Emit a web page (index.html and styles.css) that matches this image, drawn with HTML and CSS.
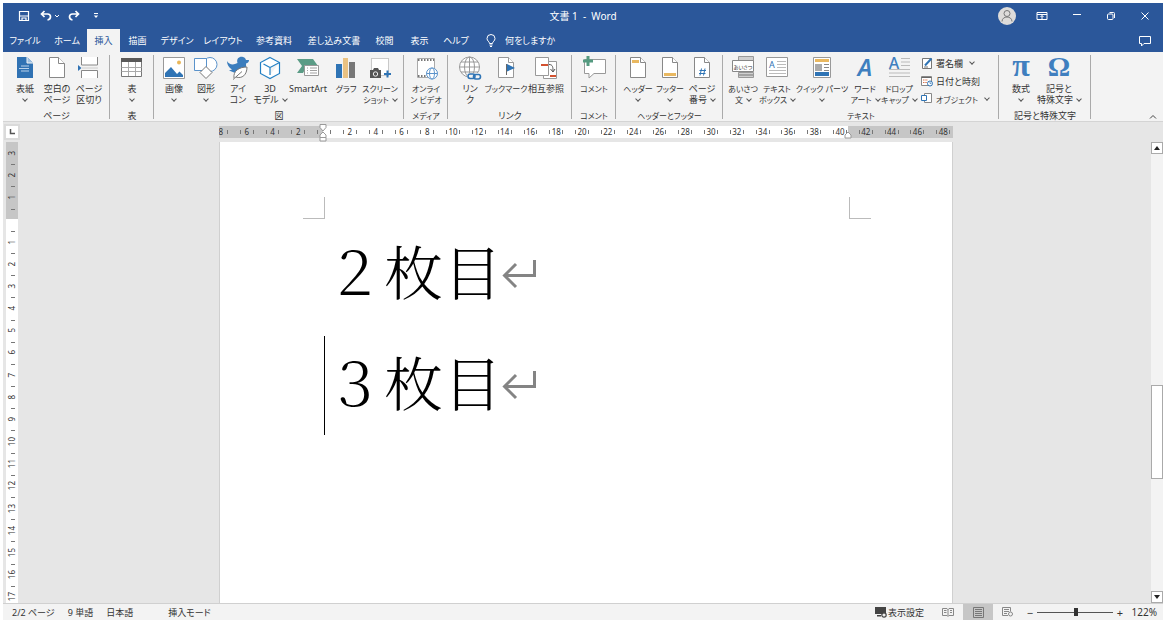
FILE: index.html
```html
<!DOCTYPE html>
<html lang="ja">
<head>
<meta charset="utf-8">
<title>文書 1 - Word</title>
<link rel="stylesheet" href="styles.css">
</head>
<body>
<div class="app">
<header class="titlebar">
  <div class="title-row">
    <div class="quick">
      <button aria-label="上書き保存"><svg width="12" height="12" viewBox="0 0 12 12" fill="none" stroke="#fff" stroke-width="1.2"><path d="M1.5 1.5h9v9h-9z"/><path d="M1.5 6h9M4 10V8h4v2" /></svg></button>
      <button aria-label="元に戻す"><svg width="12" height="12" viewBox="0 0 12 12" fill="none" stroke="#fff" stroke-width="1.7"><path d="M4.5 1 1.5 4l3 3M2 4h5.5c4 0 4 5.500 0 6"/></svg></button>
      <button class="tiny" aria-label="履歴"><svg width="6" height="6" viewBox="0 0 6 6" fill="none" stroke="#fff"><path d="M1 2l2 2 2-2"/></svg></button>
      <button aria-label="やり直し"><svg width="12" height="12" viewBox="0 0 12 12" fill="none" stroke="#fff" stroke-width="1.700"><path d="M7.500 1l3 3-3 3M10 4H4.500c-4 0-4 5.500 0 6"/></svg></button>
      <button class="customize" aria-label="カスタマイズ"><svg width="6" height="6" viewBox="0 0 6 6"><path d="M1 .5h4" stroke="#fff"/><path d="M.8 2.500h4.400L3 5z" fill="#fff"/></svg></button>
    </div>
    <h1 class="title">文書 1&nbsp; -&nbsp; Word</h1>
    <div class="window-controls">
      <button class="avatar" aria-label="アカウント"><svg width="18" height="18" viewBox="0 0 18 18" fill="none" stroke="#777"><circle cx="9" cy="9" r="9" fill="#dedcda" stroke="none"/><circle cx="9" cy="6.500" r="3"/><path d="M4 14.500c0-6 10-6 10 0"/></svg></button>
      <button aria-label="リボンの表示オプション"><svg width="12" height="10" viewBox="0 0 12 10" fill="none" stroke="#fff"><path d="M1 1.500h10v7H1zM1 3.500h10M6 8V4.500M4.500 6 6 4.500 7.500 6"/></svg></button>
      <button aria-label="最小化"><svg width="10" height="10" viewBox="0 0 10 10" stroke="#fff"><path d="M1 3.500h8"/></svg></button>
      <button aria-label="元に戻す (縮小)"><svg width="10" height="10" viewBox="0 0 10 10" fill="none" stroke="#fff"><rect x="1.500" y="3" width="5.500" height="5.500" rx="1"/><path d="M3.500 1.500h4q1 0 1 1v4.500"/></svg></button>
      <button aria-label="閉じる"><svg width="10" height="10" viewBox="0 0 10 10" stroke="#fff"><path d="M1.500 1.500l7 7M8.500 1.500l-7 7"/></svg></button>
    </div>
  </div>
  <div class="tab-row">
    <nav class="tabs">
      <button>ファイル</button><button>ホーム</button><button class="active">挿入</button><button>描画</button><button>デザイン</button><button>レイアウト</button><button>参考資料</button><button>差し込み文書</button><button>校閲</button><button>表示</button><button>ヘルプ</button>
    </nav>
    <label class="tell-me"><svg width="10" height="14" viewBox="0 0 10 14" fill="none" stroke="#fff"><path d="M3.500 9.500C3.500 7.500 1 7 1 4.500a4 4 0 0 1 8 0C9 7 6.500 7.500 6.500 9.500zM3.500 11h3M4 12.500h2"/></svg><input type="text" placeholder="何をしますか" aria-label="何をしますか"></label>
    <button class="comments" aria-label="コメント"><svg width="12" height="12" viewBox="0 0 12 12" fill="none" stroke="#fff"><path d="M.5 1.500h11v7H5L2.500 11V8.500h-2z"/></svg></button>
  </div>
</header>

<section class="ribbon" aria-label="挿入">
  <div class="group g-three">
    <div class="items">
      <button class="item"><svg viewBox="0 0 24 24"><path d="M4 1h10l6 6v15H4z" fill="#3072b3"/><path d="M14 1v6h6" fill="#9cc0e2" stroke="#f3f3f3"/><path d="M8 10h8M6 12.500h10M8 15h8" stroke="#b9d2ea"/></svg><span>表紙</span><i class="chev"></i></button>
      <button class="item"><svg viewBox="0 0 24 24"><path d="M4.500 1.500h9l6 6v14h-15z" fill="#fff" stroke="#888"/><path d="M13.500 1.500v6h6" fill="#fff" stroke="#888"/></svg><span>空白の<br>ページ</span></button>
      <button class="item"><svg viewBox="0 0 24 24"><path d="M4.500 1v8h16V1M4.500 22v-7.500h16V22" fill="#fff" stroke="#888"/><path d="M5 12h16" stroke="#ccc"/><path d="M1 9l3.500 3L1 15z" fill="#3072b3"/></svg><span>ページ<br>区切り</span></button>
    </div>
    <h2>ページ</h2>
  </div>
  <div class="group g-one">
    <div class="items">
      <button class="item"><svg viewBox="0 0 24 24"><path d="M1.500 2.500h20v18h-20z" fill="#fff" stroke="#777"/><path d="M1 2h21v4H1z" fill="#595959"/><path d="M1.500 11.500h20M1.500 15.500h20M8.500 6v14M15.500 6v14" stroke="#aaa"/></svg><span>表</span><i class="chev"></i></button>
    </div>
    <h2>表</h2>
  </div>
  <div class="group g-figure">
    <div class="items">
      <button class="item"><svg viewBox="0 0 24 24"><path d="M1.500 1.500h21v21h-21z" fill="#fff" stroke="#999"/><path d="M3 21v-4l6-6 6 7 2.500-2.500L21 19v2z" fill="#2f74b5"/><circle cx="17" cy="6.500" r="2" fill="#e9b75a"/></svg><span>画像</span><i class="chev"></i></button>
      <button class="item"><svg viewBox="0 0 24 24" fill="#fff" stroke="#5b93cb"><circle cx="16" cy="8.500" r="7"/><path d="M.500 2.500h12v12H.5z"/><path d="M12 10.500l6 6-6 6-6-6z" stroke="#777"/></svg><span>図形</span><i class="chev"></i></button>
      <button class="item"><svg viewBox="0 0 24 24"><path d="M1 5c2 3.500 6 4.500 10.500 2C10 2 14 0 17 1c2 .6 2.700 2 3 3h3c0 2-1 3-3 3.500 1 8-6 12-12 9l-5-2 3-1C3 11.500 1 9 1 5z" fill="#3b7dbd"/><path d="M8 22c-1-7 5-11 13-11 0 8-5 12-11 10M7 23.500l9-8" fill="#fff" stroke="#777"/></svg><span>アイ<br>コン</span></button>
      <button class="item"><svg viewBox="0 0 24 24" fill="#fff" stroke="#2480c4" stroke-width="1.200"><path d="M12 1.500l9.500 5v11L12 22.500l-9.500-5v-11zM5.500 8l6.500 3.500M21.500 6.500L12 11.500V19"/></svg><span>3D<br>モデル<i class="chev"></i></span></button>
      <button class="item"><svg viewBox="0 0 24 24"><path d="M1 3h16l5 7H11l-4 7H1l5-7z" fill="#5b9c86"/><path d="M8.500 9.500h14v10h-14z" fill="#fff" stroke="#999"/><path d="M11 12h1M11 14.500h1M11 17h1M14 12h7M14 14.500h7M14 17h7" stroke="#888" stroke-width=".8"/></svg><span>SmartArt</span></button>
      <button class="item"><svg viewBox="0 0 24 24"><path d="M2 8h6v14H2z" fill="#2f74b5"/><path d="M9 2h5v20H9z" fill="#eac282"/><path d="M15 6h6v16h-6z" fill="#777"/></svg><span class="compact">グラフ</span></button>
      <button class="item"><svg viewBox="0 0 24 24"><path d="M3.500 2.500h17v17h-17z" fill="#fff" stroke="#999" stroke-dasharray="1 1"/><path d="M2 14h3l1-2h4l1 2h2v8H2z" fill="#555"/><circle cx="7.500" cy="18" r="2.200" fill="#555" stroke="#eee"/><path d="M19.500 14.500v7M16 18h7" stroke="#2f74b5" stroke-width="2"/></svg><span class="compact">スクリーン<br>ショット<i class="chev"></i></span></button>
    </div>
    <h2>図</h2>
  </div>
  <div class="group g-one">
    <div class="items">
      <button class="item"><svg viewBox="0 0 24 24"><path d="M3.500 2.500h17v19h-17z" fill="#fff" stroke="#aaa"/><path d="M4 4h16M4 20h9" stroke="#777" stroke-width="2" stroke-dasharray="1.500 1.500"/><g fill="#fff" stroke="#5b93cb"><circle cx="18" cy="17.500" r="5.500"/><ellipse cx="18" cy="17.500" rx="2.500" ry="5.500"/><path d="M12.500 17.500h11"/></g></svg><span class="compact">オンライ<br>ン ビデオ</span></button>
    </div>
    <h2 class="compact">メディア</h2>
  </div>
  <div class="group g-link">
    <div class="items">
      <button class="item"><svg viewBox="0 0 24 24" fill="none"><g fill="#fff" stroke="#999"><circle cx="11.500" cy="11" r="10"/><ellipse cx="11.500" cy="11" rx="5" ry="10"/><path d="M1.500 11h20M3 6h17M3 16h17M11.500 1v20"/></g><path d="M9 17h14v7H9z" fill="#f3f3f3"/><rect x="10" y="18" width="7" height="4.500" rx="2.200" stroke="#2f74b5" stroke-width="1.600"/><rect x="15.500" y="18.500" width="7" height="4.500" rx="2.200" stroke="#2f74b5" stroke-width="1.600"/></svg><span>リン<br>ク</span></button>
      <button class="item"><svg viewBox="0 0 24 24"><path d="M4.500 1.500h10l5 5v15h-15z" fill="#fff" stroke="#999"/><path d="M14.500 1.500v5h5" fill="#fff" stroke="#999"/><path d="M12.500 8v11" stroke="#666"/><path d="M13 8l8 4-8 3.500z" fill="#2f74b5"/></svg><span class="compact">ブックマーク</span></button>
      <button class="item"><svg viewBox="0 0 24 24"><path d="M9.500 5.500h13v17h-13z" fill="#fff" stroke="#999"/><path d="M1.500 1.500h13v18h-13z" fill="#fff" stroke="#999"/><path d="M7 9h7M16 20h6" stroke="#d35230" stroke-width="2"/><path d="M15 8.500c4 0 4 3 4 7M16.500 13l2.500 3 2-3" fill="none" stroke="#555"/></svg><span>相互参照</span></button>
    </div>
    <h2>リンク</h2>
  </div>
  <div class="group g-one">
    <div class="items">
      <button class="item"><svg viewBox="0 0 24 24"><path d="M2.500 3.500h21v14H12l-5 4.500v-4.500H2.500z" fill="#fff" stroke="#999"/><path d="M6 0v10M1 5h10" stroke="#559a80" stroke-width="3"/></svg><span class="compact">コメント</span></button>
    </div>
    <h2 class="compact">コメント</h2>
  </div>
  <div class="group g-three">
    <div class="items">
      <button class="item"><svg viewBox="0 0 24 24"><path d="M4.500 1.500h10l5 5v15h-15z" fill="#fff" stroke="#888"/><path d="M14.500 1.500v5h5" fill="#fff" stroke="#888"/><path d="M6 4h7v3H6z" fill="#e9b860"/></svg><span class="compact">ヘッダー</span><i class="chev"></i></button>
      <button class="item"><svg viewBox="0 0 24 24"><path d="M4.500 1.500h10l5 5v15h-15z" fill="#fff" stroke="#888"/><path d="M14.500 1.500v5h5" fill="#fff" stroke="#888"/><path d="M6 17h12v3H6z" fill="#e9b860"/></svg><span class="compact">フッター</span><i class="chev"></i></button>
      <button class="item"><svg viewBox="0 0 24 24"><path d="M4.500 1.500h10l5 5v15h-15z" fill="#fff" stroke="#888"/><path d="M14.500 1.500v5h5" fill="#fff" stroke="#888"/><path d="M11.500 12.500l-1.500 7M15 12.500l-1.500 7M9.500 14.500h6.500M9 17.500h6.500" stroke="#2f74b5"/></svg><span>ページ<br>番号<i class="chev"></i></span></button>
    </div>
    <h2 class="compact">ヘッダーとフッター</h2>
  </div>
  <div class="group g-text">
    <div class="items">
      <button class="item"><svg viewBox="0 0 24 24"><path d="M7.500.5h15v5h-15zM7.500 16.500h15v5h-15z" fill="#d0d0d0" stroke="#999"/><path d="M8 19h14" stroke="#777"/><path d="M1.500 4.500h21v11h-21z" fill="#fff" stroke="#888"/><text class="glyph-greeting" x="12" y="12.500">あいさつ</text></svg><span class="compact">あいさつ<br>文<i class="chev"></i></span></button>
      <button class="item"><svg viewBox="0 0 24 24"><path d="M1.500 1.500h21v19h-21z" fill="#fff" stroke="#999"/><text class="glyph-box" x="7" y="12">A</text><path d="M12 5.500h9M12 8.500h9M12 11.500h9M4 14.500h17M4 17.500h17" stroke="#bbb"/></svg><span class="compact">テキスト<br>ボックス<i class="chev"></i></span></button>
      <button class="item"><svg viewBox="0 0 24 24"><path d="M3.500 1.500h17v20h-17z" fill="#fff" stroke="#999"/><path d="M5 3h14v3H5z" fill="#e9b860"/><path d="M5 8h7v7H5z" fill="#aaa"/><path d="M14 8.500h5M14 11.500h5M14 14.500h5" stroke="#888"/><path d="M5 16h14v4H5z" fill="#2f74b5"/></svg><span class="compact">クイック パーツ</span><i class="chev"></i></button>
      <button class="item"><svg viewBox="0 0 24 24"><text class="glyph-art" x="12" y="20">A</text></svg><span class="compact">ワード<br>アート<i class="chev"></i></span></button>
      <button class="item"><svg viewBox="0 0 24 24"><text class="glyph-drop" x="7" y="13">A</text><path d="M14 2.500h9M14 6h9M14 9.500h9M2 13.500h21M2 17h21M2 20.500h21" stroke="#bbb"/></svg><span class="compact">ドロップ<br>キャップ<i class="chev"></i></span></button>
      <div class="small-items">
        <button><svg width="12" height="12" viewBox="0 0 12 12"><path d="M1.500 1.500h9v10h-9z" fill="#fff" stroke="#777"/><path d="M4 8.500l6.500-7" stroke="#2f74b5" stroke-width="2"/><path d="M3 10h4" stroke="#777"/></svg>署名欄<i class="chev"></i></button>
        <button><svg width="12" height="12" viewBox="0 0 12 12"><path d="M.5 1.500h10v9H.5z" fill="#fff" stroke="#888"/><path d="M.5 2.500h10" stroke="#666"/><path d="M2 5h5M2 7.500h4" stroke="#d9734f" stroke-dasharray="1.500 .8"/><circle cx="9" cy="8.500" r="2.500" fill="#fff" stroke="#2f74b5"/><path d="M9 7v1.500h1.500" fill="none" stroke="#2f74b5" stroke-width=".7"/></svg>日付と時刻</button>
        <button><svg width="12" height="12" viewBox="0 0 12 12" fill="#fff"><path d="M3.500.5h7v9h-7z" stroke="#888"/><path d="M.5 2.500h5v5h-5z" stroke="#2f74b5"/></svg><span class="compact">オブジェクト</span><i class="chev"></i></button>
      </div>
    </div>
    <h2 class="compact">テキスト</h2>
  </div>
  <div class="group g-symbol">
    <div class="items">
      <button class="item"><svg viewBox="0 0 24 24"><text class="glyph-symbol" x="12" y="20">π</text></svg><span>数式</span><i class="chev"></i></button>
      <button class="item"><svg viewBox="0 0 24 24"><text class="glyph-symbol omega" x="12" y="20">Ω</text></svg><span>記号と<br>特殊文字<i class="chev"></i></span></button>
    </div>
    <h2>記号と特殊文字</h2>
  </div>
  <button class="collapse" aria-label="リボンを折りたたむ"><svg width="8" height="6" viewBox="0 0 8 6" fill="none" stroke="#444"><path d="M1 4.500l3-3 3 3"/></svg></button>
</section>

<main class="workspace">
  <button class="tab-stop" aria-label="左揃えタブ"><svg width="6" height="6" viewBox="0 0 6 6" fill="none" stroke="#555" stroke-width="1.500"><path d="M1.500 0v4.500H6"/></svg></button>
  <div class="ruler-area">
    <div class="h-ruler">
      <div class="h-marks" id="h-marks"></div>
      <svg class="indent indent-left" width="8" height="18" viewBox="0 0 8 18" fill="#fff" stroke="#999"><path d="M1 .5h6v3L4 7 1 3.500zM4 8l3 3v2.500H1V11zM1 13.500h6v3.500H1z"/></svg>
      <svg class="indent indent-right" width="8" height="8" viewBox="0 0 8 8" fill="#fff" stroke="#999"><path d="M4 1l3 3v3H1V4z"/></svg>
    </div>
  </div>
  <div class="v-ruler"><div class="v-marks" id="v-marks"></div></div>
  <div class="canvas">
    <article class="page">
      <div class="crop-marks"><i class="crop-left"></i><i class="crop-right"></i></div>
      <p>２枚目<svg class="return" viewBox="0 0 34 32" fill="none" stroke="#848484" stroke-width="3"><path d="M14 5L2.500 16.500 14 28M3 16.500h29.500V1"/></svg></p>
      <p class="current">３枚目<svg class="return" viewBox="0 0 34 32" fill="none" stroke="#848484" stroke-width="3"><path d="M14 5L2.500 16.500 14 28M3 16.500h29.500V1"/></svg></p>
    </article>
  </div>
  <div class="scrollbar">
    <button aria-label="上へ"><svg width="6" height="4" viewBox="0 0 6 4"><path d="M0 4l3-4 3 4z" fill="#222"/></svg></button>
    <div class="track"><div class="thumb"></div></div>
    <button aria-label="下へ"><svg width="6" height="4" viewBox="0 0 6 4"><path d="M0 0l3 4 3-4z" fill="#222"/></svg></button>
  </div>
</main>

<footer class="status">
  <span>2/2 ページ</span><span>9 単語</span><span>日本語</span><span class="mode">挿入モード</span>
  <div class="status-right">
    <button class="display"><svg width="12" height="12" viewBox="0 0 12 12"><path d="M0 1h11v7H0zM2 9h4v1.500H2z" fill="#444"/><circle cx="9" cy="9" r="2.200" fill="#eee" stroke="#444" stroke-width="1.200"/></svg>表示設定</button>
    <button class="view" aria-label="閲覧モード"><svg width="12" height="10" viewBox="0 0 12 10" fill="none" stroke="#888"><path d="M.5 1.500H5l1 1 1-1h4.500v7H7l-1 1-1-1H.5zM6 2v7M2 3.500h2.500M2 5.500h2.500M8 3.500h2M8 5.500h2"/></svg></button>
    <button class="view on" aria-label="印刷レイアウト"><svg width="11" height="11" viewBox="0 0 11 11" fill="none" stroke="#777"><path d="M.5.5h10v10H.5zM2 2.500h7M2 4.500h7M2 6.500h7M2 8.500h7"/></svg></button>
    <button class="view" aria-label="Web レイアウト"><svg width="12" height="10" viewBox="0 0 12 10" fill="none" stroke="#888"><path d="M6 8.500H.5v-8h8v4M2 2.500h5M2 4.500h5M2 6.500h3"/><circle cx="8.500" cy="7" r="2"/></svg></button>
    <button class="step" aria-label="縮小">−</button>
    <input class="zoom" type="range" min="0" max="100" value="52" aria-label="ズーム">
    <button class="step" aria-label="拡大">+</button>
    <output class="percent">122%</output>
  </div>
</footer>
</div>
<script src="rulers.js"></script>
</body>
</html>
```
FILE: rulers.js
```js
function fill(id, from, to, step) {
  const strip = document.getElementById(id);
  for (let n = from; n <= to; n += step) {
    const mark = document.createElement('span');
    const label = document.createElement('b');
    label.textContent = n === 0 ? '' : Math.abs(n);
    mark.append(label);
    strip.append(mark);
  }
}
fill('h-marks', -8, 48, 2);
fill('v-marks', -3, 17, 1);
```
FILE: styles.css
```css
* { box-sizing: border-box; }
body {
  margin: 0;
  padding: 3px 5px 5px 3px;
  background: #fff;
  color: #333;
  font: 9px/11px "Noto Sans", "Noto Sans CJK JP", sans-serif;
  font-feature-settings: "palt";
}
button, input { font: inherit; color: inherit; font-feature-settings: inherit; }
button {
  margin: 0;
  padding: 0;
  border: 0;
  background: none;
  display: flex;
  align-items: center;
  justify-content: center;
  white-space: nowrap;
}
svg { display: block; flex: none; overflow: visible; }
.app { display: flex; flex-direction: column; height: calc(100vh - 8px); overflow: hidden; }

.titlebar { background: #2b579a; color: #fff; }
.title-row { display: grid; grid-template-columns: 1fr auto 1fr; align-items: center; height: 26px; }
.quick { display: flex; align-items: center; padding-left: 15px; gap: 10px; }
.quick .tiny { margin: 0 -2px 0 -8px; }
.quick .customize { margin-left: 3px; }
.title { margin: 0; font-size: 10px; font-weight: 400; line-height: 26px; }
.window-controls { display: flex; justify-content: flex-end; align-items: center; gap: 24px; padding-right: 13px; }
.avatar { margin-right: -4px; }
.tab-row { display: flex; height: 23px; }
.tabs { display: grid; grid-template-columns: 44px 40px 33px 35px 44px 48px 54px 66px 35px 35px 38px; }
.tabs .active { background: #f3f3f3; color: #2b579a; }
.tell-me { display: flex; align-items: center; gap: 9px; padding-left: 11px; flex: 1; }
.tell-me input { border: 0; padding: 0; background: none; width: 80px; outline: 0; }
.tell-me input::placeholder { color: #fff; opacity: 1; }
.comments { padding-right: 12px; }

.ribbon { display: flex; background: #f3f3f3; height: 70px; padding-top: 3px; border-bottom: 1px solid #d4d4d4; position: relative; }
.group {
  display: flex;
  flex-direction: column;
  background: linear-gradient(#aaa, #aaa) right top / 1px 64px no-repeat;
}
.items { display: grid; flex: 1; padding: 0 6px; align-content: start; }
.group h2 { margin: 0; font: inherit; text-align: center; white-space: nowrap; }
.compact, .group h2.compact { font-size: 8px; }
.g-one { width: 44px; }
.g-one .items { padding: 0; }
.g-three { width: 107px; }
.g-three .items { grid-template-columns: 32px 32px 32px; }
.g-figure { width: 250px; }
.g-figure .items { grid-template-columns: 32px 32px 32px 32px 44px 32px 36px; padding: 0 4px; }
.g-link { width: 124px; }
.g-link .items { grid-template-columns: 32px 40px 40px; }
.g-text { width: 276px; }
.g-text .items { grid-template-columns: 32px 36px 54px 32px 36px 72px; padding: 0 4px; }
.g-symbol { width: 92px; }
.g-symbol .items { grid-template-columns: 32px 44px; }
.item { flex-direction: column; justify-content: flex-start; text-align: center; min-width: 0; }
.item > svg { width: 24px; height: 24px; margin: 1px 0 3px; }
.chev {
  display: inline-block;
  width: 4px;
  height: 4px;
  border: solid #555;
  border-width: 0 1px 1px 0;
  transform: rotate(45deg);
  margin: 0 0 2px 4px;
}
.item > .chev { margin: 3px 0 0; }
.glyph-greeting { font-size: 5px; text-anchor: middle; fill: #333; }
.glyph-box { font-size: 9px; text-anchor: middle; fill: #2f74b5; }
.glyph-art { font: italic 600 24px/24px "Noto Sans", sans-serif; text-anchor: middle; fill: #3f7fbf; }
.glyph-drop { font: 500 16px/16px "Noto Sans", sans-serif; text-anchor: middle; fill: #3f7fbf; }
.glyph-symbol { font: 700 32px/24px "Liberation Serif", serif; text-anchor: middle; fill: #3f7fbf; }
.glyph-symbol.omega { font-size: 28px; }
.small-items { display: flex; flex-direction: column; gap: 6px; padding: 2px 0 0 4px; }
.small-items button { justify-content: flex-start; gap: 3px; height: 12px; }
.collapse { position: absolute; right: 6px; bottom: 1px; }

.workspace { display: grid; grid-template: 20px minmax(0, 1fr) / 18px minmax(0, 1fr) 12px; flex: 1; min-height: 0; background: #e6e6e6; }
.tab-stop { width: 16px; height: 16px; margin: 2px 0 0 1px; background: #fff; border: 2px solid #dadada; }
.ruler-area { grid-column: 2 / 4; padding: 4px 12px 0 0; }
.h-ruler { position: relative; width: 734px; height: 12px; margin: 0 auto; background: linear-gradient(90deg, #c6c6c6 104px, #fff 104px 629px, #c6c6c6 629px); }
.h-marks { display: flex; overflow: hidden; height: 12px; font-size: 8px; line-height: 12px; }
.h-marks span { flex: 0 0 calc(100% / 28.45); display: flex; align-items: center; }
.h-marks span:first-child { margin-left: -11px; }
.h-marks span::before, .h-marks span::after { content: ""; width: 25%; height: 4px; border-right: 1px solid #777; }
.h-marks span::after { border-right: 0; border-left: 1px solid #777; }
.h-marks b, .v-marks b { font-weight: 400; }
.h-marks b { width: 50%; display: flex; justify-content: center; }
.indent { position: absolute; }
.indent-left { left: 100px; top: -2px; }
.indent-right { left: 625px; top: 5px; }
.v-ruler { grid-column: 1; width: 12px; margin-left: 3px; overflow: hidden; background: linear-gradient(#c6c6c6 77px, #fff 77px); }
.v-marks { display: flex; flex-direction: column; height: 466px; font-size: 8px; line-height: 12px; }
.v-marks span { flex: 1; position: relative; display: flex; align-items: center; justify-content: center; }
.v-marks span + span::before { content: ""; position: absolute; top: 0; left: 5px; width: 4px; height: 1px; background: #777; }
.v-marks b { writing-mode: vertical-rl; transform: rotate(180deg); }
.canvas { min-width: 0; overflow: hidden; }
.page { width: 734px; height: 100%; margin: 0 auto; padding: 55px 81px 0 83px; background: #fff; border: solid #d0d0d0; border-width: 0 1px; }
.crop-marks { display: flex; justify-content: space-between; height: 22px; }
.crop-marks i { width: 22px; border: solid #bbb; border-width: 0 1px 1px 0; }
.crop-marks .crop-right { border-width: 0 0 1px 1px; }
.page p {
  display: flex;
  align-items: center;
  height: 99px;
  margin: 6px 0 0 21px;
  padding-bottom: 10px;
  border-left: 1px solid transparent;
  color: #000;
  font: 300 59px/89px "Noto Serif CJK JP", serif;
  font-feature-settings: normal;
}
.page p + p { margin-top: 12px; }
.page .current { border-color: #000; }
.return { width: 34px; height: 32px; margin-top: 10px; }
.scrollbar { display: flex; flex-direction: column; background: #f3f3f3; }
.scrollbar button { height: 12px; background: #fff; border: 1px solid #aaa; }
.track { flex: 1; display: grid; grid-template-rows: 230fr 94fr 112fr; }
.thumb { grid-row: 2; background: #fff; border: 1px solid #aaa; }

.status { display: flex; align-items: center; height: 17px; padding-left: 9px; gap: 13px; background: #f3f3f3; border-top: 1px solid #d0d0d0; }
.status .mode { margin-left: 22px; }
.status-right { display: flex; align-items: center; margin-left: auto; height: 100%; padding-right: 6px; }
.display { margin-right: 9px; gap: 1px; }
.view { width: 30px; height: 100%; }
.view.on { background: #c6c6c6; }
.step { width: 14px; font-size: 11px; }
.zoom { appearance: none; width: 76px; height: 10px; margin: 0; background: linear-gradient(#555, #555) center / 100% 1px no-repeat; }
.zoom::-webkit-slider-thumb { appearance: none; width: 4px; height: 8px; background: #333; }
.percent { width: 30px; text-align: right; font-size: 10px; }
```
